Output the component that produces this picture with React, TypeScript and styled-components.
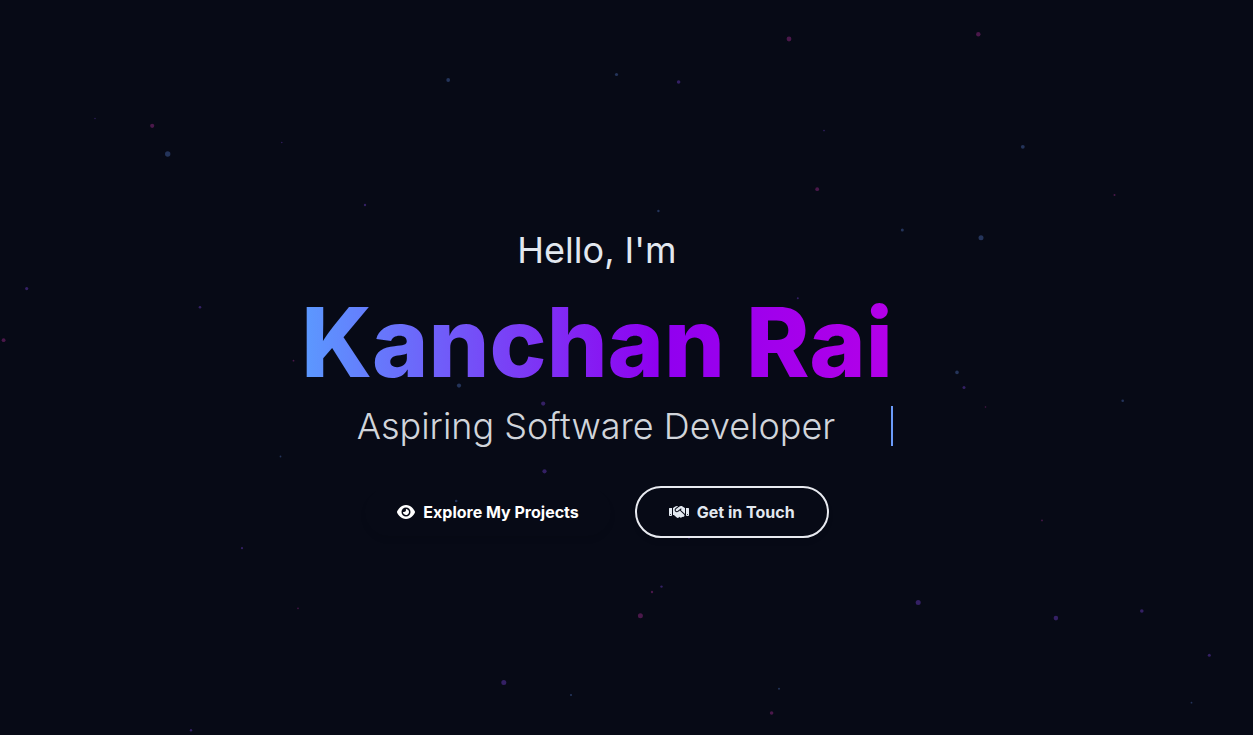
import React from 'react';
import styled, { createGlobalStyle } from 'styled-components';
import { FaEye, FaHandshake } from 'react-icons/fa6';

const GlobalStyle = createGlobalStyle`
  *, *::before, *::after { box-sizing: border-box; }
  body {
    margin: 0;
    background: #070a16;
    color: #e2e8f0;
    font-family: Inter, sans-serif;
  }
`;

const Hero = styled.main`
  position: relative;
  display: flex;
  align-items: center;
  justify-content: center;
  min-height: 100vh;
  padding: 32px 59px 0 0;
  overflow: hidden;
`;

const Starfield = styled.svg`
  position: absolute;
  inset: 0;
  width: 100%;
  height: 100%;
  pointer-events: none;
`;

const Content = styled.section`
  position: relative;
  display: flex;
  flex-direction: column;
  text-align: center;
`;

const Greeting = styled.p`
  margin: 0 0 24px;
  font-size: 36px;
  line-height: 40px;
`;

const Name = styled.h1`
  margin: 0 0 16px;
  font-size: 96px;
  font-weight: 800;
  line-height: 96px;
  color: transparent;
  background: linear-gradient(to right, #5b9aff, #8f00f0 60%, #b400e8);
  background-clip: text;
  -webkit-background-clip: text;
`;

const Role = styled.p`
  margin: 0 0 40px;
  border-right: 2px solid #6b9bfa;
  color: #d1d5db;
  font-size: 36px;
  font-weight: 300;
  line-height: 40px;
`;

const Actions = styled.div`
  display: flex;
  flex-wrap: wrap;
  align-items: center;
  justify-content: center;
  gap: 24px;
`;

const Button = styled.button<{ $outlined?: boolean }>`
  display: inline-flex;
  align-items: center;
  gap: 8px;
  padding: 12px 32px;
  border: ${(p) => (p.$outlined ? '2px solid #e8eaf0' : '0')};
  border-radius: 26px;
  background: transparent;
  box-shadow: 0 4px 6px -1px rgba(0, 0, 0, 0.08);
  color: ${(p) => (p.$outlined ? '#e2e8f0' : '#ffffff')};
  font-family: inherit;
  font-size: 16px;
  font-weight: 700;
  line-height: 24px;
  cursor: pointer;
`;

const EyeIcon = styled(FaEye)`
  width: 18px;
  height: 16px;
`;

const HandshakeIcon = styled(FaHandshake)`
  width: 20px;
  height: 16px;
`;

const BLUE = '#24345a';
const VIOLET = '#342064';
const PINK = '#4a184a';

type Star = [x: number, y: number, radius: number, color: string];

const stars: Star[] = [
  [789, 39, 2.4, PINK],
  [978.3, 34.3, 2.2, PINK],
  [448.2, 80, 1.9, BLUE],
  [616.5, 74.5, 1.6, BLUE],
  [678.6, 82, 1.8, VIOLET],
  [95, 118.5, 0.7, VIOLET],
  [152.2, 125.8, 2.1, PINK],
  [167.7, 154, 2.7, BLUE],
  [281.8, 142.5, 0.7, VIOLET],
  [824, 130.6, 0.8, VIOLET],
  [1022.8, 146.8, 1.9, BLUE],
  [817.2, 189.2, 1.9, PINK],
  [1114.5, 195, 1, PINK],
  [365, 205, 1.2, VIOLET],
  [658.4, 211, 1.2, BLUE],
  [902.3, 230, 1.5, BLUE],
  [981, 237.7, 2.5, BLUE],
  [26.7, 288.6, 1.6, VIOLET],
  [200, 307.3, 1.3, VIOLET],
  [797.8, 298.2, 1, VIOLET],
  [3.6, 340.2, 1.9, PINK],
  [293.5, 360.7, 0.9, PINK],
  [957, 372.4, 1.8, BLUE],
  [964, 387.5, 1.5, VIOLET],
  [985.5, 407, 0.8, PINK],
  [1122.7, 400.7, 1.3, BLUE],
  [459, 385.6, 2.1, BLUE],
  [543.2, 403.6, 2.1, VIOLET],
  [544.5, 471.3, 2.1, VIOLET],
  [280.5, 456.5, 0.9, BLUE],
  [456.2, 501, 1.3, BLUE],
  [242, 548.2, 1.1, VIOLET],
  [689, 538, 1, VIOLET],
  [1042, 520.4, 0.9, PINK],
  [298, 608.4, 0.8, PINK],
  [661.5, 586.6, 1.2, VIOLET],
  [652, 592, 1.2, PINK],
  [640.4, 615.8, 2.5, PINK],
  [918.2, 602.6, 2.5, VIOLET],
  [1055.9, 618.1, 2.3, VIOLET],
  [1141.8, 611, 1.8, VIOLET],
  [503.8, 682.6, 2.5, VIOLET],
  [571, 695, 1.1, BLUE],
  [779, 688.8, 1, BLUE],
  [771.6, 713, 1.8, PINK],
  [1209.3, 655.2, 1.5, VIOLET],
  [1191.5, 702.7, 0.9, BLUE],
  [191, 730.3, 1.2, VIOLET],
];

export default function App() {
  return (
    <>
      <GlobalStyle />
      <Hero>
        <Starfield aria-hidden="true">
          {stars.map(([x, y, radius, color]) => (
            <circle key={`${x}-${y}`} cx={x} cy={y} r={radius} fill={color} />
          ))}
        </Starfield>
        <Content>
          <Greeting>Hello, I'm</Greeting>
          <Name>Kanchan Rai</Name>
          <Role>Aspiring Software Developer</Role>
          <Actions>
            <Button type="button">
              <EyeIcon aria-hidden="true" />
              Explore My Projects
            </Button>
            <Button type="button" $outlined>
              <HandshakeIcon aria-hidden="true" />
              Get in Touch
            </Button>
          </Actions>
        </Content>
      </Hero>
    </>
  );
}
